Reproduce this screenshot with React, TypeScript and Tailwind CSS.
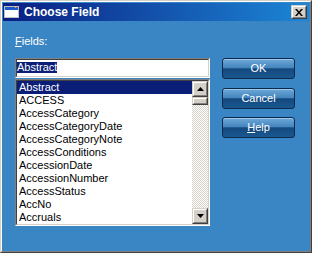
import React from "react";

const items = [
  "Abstract",
  "ACCESS",
  "AccessCategory",
  "AccessCategoryDate",
  "AccessCategoryNote",
  "AccessConditions",
  "AccessionDate",
  "AccessionNumber",
  "AccessStatus",
  "AccNo",
  "Accruals",
];

function Btn3D({ className, children }: { className?: string; children?: React.ReactNode }) {
  return (
    <div
      className={
        "border border-t-[#d4d0c8] border-l-[#d4d0c8] border-r-[#404040] border-b-[#404040] bg-[#d4d0c8] " +
        (className ?? "")
      }
    >
      <div className="w-full h-full border border-t-white border-l-white border-r-[#808080] border-b-[#808080] flex items-center justify-center">
        {children}
      </div>
    </div>
  );
}

function GlossButton({ children }: { children: React.ReactNode }) {
  return (
    <div className="w-[73px] h-[21px] rounded-[3px] border border-[#0b2a4c] bg-[linear-gradient(to_bottom,#6ea8d8_0%,#4586be_45%,#14497e_52%,#1a5890_100%)] shadow-[inset_0_1px_0_#9cc8ec] flex items-center justify-center text-white text-[11px] leading-none">
      {children}
    </div>
  );
}

export default function App() {
  return (
    <div className="w-[312px] h-[253px] bg-[#3a86c4] border border-t-[#d4d0c8] border-l-[#d4d0c8] border-r-[#404040] border-b-[#404040] font-['Liberation_Sans',Arial,sans-serif] select-none">
      <div className="w-full h-full border border-t-white border-l-white border-r-[#808080] border-b-[#808080] p-px flex flex-col">
        {/* Title bar */}
        <div className="h-[18px] flex items-center bg-[linear-gradient(to_right,#0a1e82,#1c86d6)] pl-[1px] pr-[2px]">
          <svg width="16" height="16" viewBox="0 0 16 16" className="shrink-0">
            <rect x="0.5" y="2.5" width="14" height="11" fill="#ffffff" stroke="#c0c0c0" />
            <rect x="1" y="3" width="13" height="3" fill="#1a5cc8" />
            <rect x="11" y="3" width="1" height="1" fill="#f0a040" />
            <rect x="12" y="3" width="1" height="1" fill="#e04020" />
          </svg>
          <span className="ml-[4px] text-white font-bold text-[12px] leading-none flex-1">Choose Field</span>
          <Btn3D className="w-[16px] h-[14px]">
            <svg width="8" height="7" viewBox="0 0 8 7">
              <path d="M0 0h2l2 2.5L6 0h2L5 3.5 8 7H6L4 4.5 2 7H0l3-3.5z" fill="#000" />
            </svg>
          </Btn3D>
        </div>
        {/* Body */}
        <div className="flex-1 flex pl-[12px] pt-[14px]">
          <div className="w-[195px] flex flex-col">
            <div className="text-white text-[11px] leading-[13px] h-[13px]">
              <span className="underline underline-offset-[1px]">F</span>ields:
            </div>
            <div className="mt-[10px] h-[20px] border border-t-[#808080] border-l-[#808080] border-r-white border-b-white">
              <div className="h-full border border-t-[#404040] border-l-[#404040] border-r-[#d4d0c8] border-b-[#d4d0c8] bg-white pt-[2px] flex items-start">
                <span className="block h-[11px] leading-[11px] text-[11px] bg-[#0a1e78] text-white">Abstract</span>
              </div>
            </div>
            <div className="mt-px h-[147px] border border-t-[#808080] border-l-[#808080] border-r-white border-b-white">
              <div className="h-full border border-t-[#404040] border-l-[#404040] border-r-[#d4d0c8] border-b-[#d4d0c8] bg-white flex">
                <div className="flex-1 flex flex-col">
                  {items.map((it, i) => (
                    <div
                      key={it}
                      className={
                        "h-[13px] leading-[13px] text-[11px] pl-[2px] whitespace-nowrap " +
                        (i === 0 ? "bg-[#0a1e78] text-white" : "text-black")
                      }
                    >
                      {it}
                    </div>
                  ))}
                </div>
                <div className="w-[16px] flex flex-col bg-[repeating-conic-gradient(#d4d0c8_0_25%,#ffffff_0_50%)] bg-[length:2px_2px]">
                  <Btn3D className="w-[16px] h-[16px]">
                    <svg width="7" height="4" viewBox="0 0 7 4">
                      <path d="M3.5 0L7 4H0z" fill="#000" />
                    </svg>
                  </Btn3D>
                  <Btn3D className="w-[16px] h-[8px]" />
                  <div className="flex-1" />
                  <Btn3D className="w-[16px] h-[16px]">
                    <svg width="7" height="4" viewBox="0 0 7 4">
                      <path d="M0 0h7L3.5 4z" fill="#000" />
                    </svg>
                  </Btn3D>
                </div>
              </div>
            </div>
          </div>
          <div className="ml-[12px] flex flex-col pt-[23px]">
            <GlossButton>OK</GlossButton>
            <div className="mt-[9px]">
              <GlossButton>Cancel</GlossButton>
            </div>
            <div className="mt-[8px]">
              <GlossButton>
                <span>
                  <span className="underline underline-offset-[1px]">H</span>elp
                </span>
              </GlossButton>
            </div>
          </div>
        </div>
      </div>
    </div>
  );
}
